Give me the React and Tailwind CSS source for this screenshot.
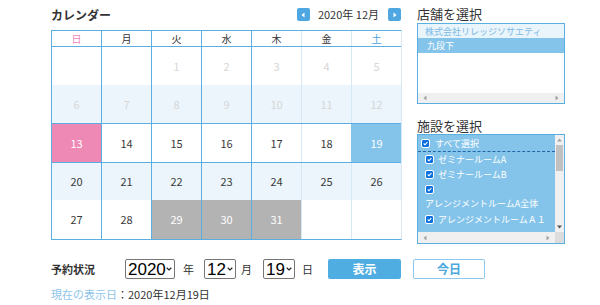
import React from 'react';

const weeks = [
  [null, null, 1, 2, 3, 4, 5],
  [6, 7, 8, 9, 10, 11, 12],
  [13, 14, 15, 16, 17, 18, 19],
  [20, 21, 22, 23, 24, 25, 26],
  [27, 28, 29, 30, 31, null, null],
];

const rowCls = [
  'h-[38px] bg-white',
  'h-[39px] bg-[#ecf5fc] border-b border-[#5aaee0]',
  'h-[39px] bg-white border-b border-[#5aaee0]',
  'h-[37px] bg-[#ecf5fc]',
  'h-[39px] bg-white',
];

const days = ['日', '月', '火', '水', '木', '金', '土'];

function cellCls(r, c, d) {
  let cls = 'flex items-center justify-center text-[11px] ';
  cls += c === 0 ? 'w-[49px] ' : 'w-[50px] border-l ';
  if (d === 13) return cls + 'bg-[#ee88b5] text-white';
  if (d === 19) return cls + 'bg-[#85c4ea] text-white border-[#85c4ea]';
  if (d === 29 || d === 30 || d === 31) return cls + 'bg-[#b3b3b3] text-white border-[#5aaee0]';
  cls += c === 0 ? '' : c <= 4 ? 'border-[#5aaee0] ' : 'border-[#d6e8f4] ';
  cls += r < 2 ? 'text-[#d6d6d6]' : 'text-[#3a3a3a]';
  return cls;
}

function headCls(c) {
  let cls = 'flex items-center justify-center text-[10px] ';
  cls += c === 0 ? 'w-[49px] ' : 'w-[50px] border-l ';
  cls += c === 0 ? '' : c <= 4 ? 'border-[#5aaee0] ' : 'border-[#d6e8f4] ';
  cls += c === 0 ? 'text-[#ee86b8]' : c === 6 ? 'text-[#4aa3dc]' : 'text-[#333]';
  return cls;
}

function Check() {
  return (
    <span className="flex h-[7px] w-[7px] shrink-0 items-center justify-center rounded-[1px] bg-[#0b6fe0] outline outline-1 outline-white">
      <svg width="5" height="5" viewBox="0 0 5 5">
        <path d="M0.7 2.5 L2 3.8 L4.4 1.1" stroke="white" strokeWidth="1.1" fill="none" />
      </svg>
    </span>
  );
}

function TriLeft({ color = '#a3a3a3' }) {
  return (
    <svg width="4" height="6" viewBox="0 0 4 6"><path d="M3.5 0.5 L0.5 3 L3.5 5.5 Z" fill={color} /></svg>
  );
}
function TriRight({ color = '#a3a3a3' }) {
  return (
    <svg width="4" height="6" viewBox="0 0 4 6"><path d="M0.5 0.5 L3.5 3 L0.5 5.5 Z" fill={color} /></svg>
  );
}

function Chevron() {
  return (
    <svg width="6" height="4" viewBox="0 0 6 4" className="shrink-0">
      <path d="M0.7 0.8 L3 3 L5.3 0.8" stroke="#222" strokeWidth="1.2" fill="none" />
    </svg>
  );
}

function Select({ value, w }) {
  return (
    <div className={`flex h-[20px] ${w} items-center justify-between rounded-[2px] border border-[#767676] bg-white pl-[2px] pr-[2px]`}>
      <span className="font-['Liberation_Sans',sans-serif] text-[17px] leading-none text-black">{value}</span>
      <Chevron />
    </div>
  );
}

export default function App() {
  return (
    <div className="h-[305px] w-[600px] overflow-hidden bg-white font-['Noto_Sans_CJK_JP',sans-serif] text-[#333]">
      <div className="flex h-[259px]">
        {/* left column */}
        <div className="ml-[51px] flex w-[351px] flex-col">
          <div className="flex h-[30px] items-center justify-between pb-[1px]">
            <span className="text-[12px] font-bold leading-none text-[#333]">カレンダー</span>
            <div className="flex items-center">
              <div className="flex h-[13px] w-[13px] items-center justify-center rounded-[2px] bg-[#4ea7e0]">
                <TriLeft color="#ffffff" />
              </div>
              <span className="ml-[8px] mr-[9px] text-[11px] leading-none text-[#333]">2020年 12月</span>
              <div className="mr-[1px] flex h-[13px] w-[13px] items-center justify-center rounded-[2px] bg-[#4ea7e0]">
                <TriRight color="#ffffff" />
              </div>
            </div>
          </div>
          <div className="flex flex-col border border-[#5aaee0] border-r-[#d6e8f4]">
            <div className="flex h-[16px] border-b border-[#5aaee0] bg-white">
              {days.map((d, c) => (
                <div key={d} className={headCls(c)}>{d}</div>
              ))}
            </div>
            {weeks.map((wk, r) => (
              <div key={r} className={`flex ${rowCls[r]}`}>
                {wk.map((d, c) => (
                  <div key={c} className={cellCls(r, c, d)}>{d ?? ''}</div>
                ))}
              </div>
            ))}
          </div>
        </div>

        {/* right column */}
        <div className="ml-[15px] flex w-[148px] flex-col">
          <div className="flex h-[23px] items-center pt-[3px] text-[13px] leading-none text-[#333]">店舗を選択</div>
          <div className="flex h-[81px] flex-col border border-[#5aaee0] bg-white">
            <div className="flex h-[14px] items-center bg-[#e9f4fb] pl-[7px] text-[9px] leading-none text-[#7dbbe5]">株式会社リレッジソサエティ</div>
            <div className="flex h-[15px] items-center bg-[#85c4ea] pl-[9px] text-[9px] leading-none text-white">九段下</div>
            <div className="flex-1" />
            <div className="flex h-[10px] items-center justify-between bg-[#f0f0f0] px-[5px]">
              <TriLeft />
              <TriRight />
            </div>
          </div>
          <div className="flex h-[30px] items-center pt-[12px] text-[13px] leading-none text-[#333]">施設を選択</div>
          <div className="flex h-[110px] flex-col border border-[#5aaee0] bg-[#85c4ea]">
            <div className="flex flex-1">
              <div className="flex flex-1 flex-col text-[9px] leading-none text-white">
                <div className="flex h-[17px] items-center gap-[6px] border-b border-dashed border-[#2065a5] pl-[4px] pt-[1px]">
                  <Check />
                  <span>すべて選択</span>
                </div>
                <div className="flex h-[15px] items-center gap-[5px] pl-[8px]">
                  <Check />
                  <span>ゼミナールームA</span>
                </div>
                <div className="flex h-[15px] items-center gap-[5px] pl-[8px]">
                  <Check />
                  <span>ゼミナールームB</span>
                </div>
                <div className="flex h-[14px] items-center pl-[8px]">
                  <Check />
                </div>
                <div className="flex h-[15px] items-center pl-[7px] whitespace-nowrap">アレンジメントルームA全体</div>
                <div className="flex h-[16px] items-center gap-[5px] pl-[8px] whitespace-nowrap">
                  <Check />
                  <span>アレンジメントルームＡ１</span>
                </div>
              </div>
              <div className="flex w-[9px] flex-col items-center bg-[#f0f0f0]">
                <svg width="5" height="4" viewBox="0 0 5 4" className="mt-[3px]"><path d="M0 3.5 L2.5 0.5 L5 3.5 Z" fill="#a3a3a3" /></svg>
                <div className="mt-[3px] h-[26px] w-[7px] bg-[#c1c1c1]" />
                <div className="flex-1" />
                <svg width="5" height="4" viewBox="0 0 5 4" className="mb-[3px]"><path d="M0 0.5 L2.5 3.5 L5 0.5 Z" fill="#505050" /></svg>
              </div>
            </div>
            <div className="flex h-[11px]">
              <div className="flex flex-1 items-center justify-between bg-[#f0f0f0] px-[5px]">
                <TriLeft />
                <TriRight />
              </div>
              <div className="w-[9px] bg-[#dcdcdc]" />
            </div>
          </div>
        </div>
      </div>

      {/* bottom */}
      <div className="ml-[51px] flex h-[20px] items-center">
        <span className="w-[74px] text-[11px] font-bold leading-none text-[#333]">予約状況</span>
        <Select value="2020" w="w-[50px]" />
        <span className="ml-[8px] text-[11px] leading-none text-[#333]">年</span>
        <div className="ml-[10px]"><Select value="12" w="w-[32px]" /></div>
        <span className="ml-[5px] text-[11px] leading-none text-[#333]">月</span>
        <div className="ml-[11px]"><Select value="19" w="w-[32px]" /></div>
        <span className="ml-[7px] text-[11px] leading-none text-[#333]">日</span>
        <div className="ml-[15px] flex h-[20px] w-[73px] items-center justify-center rounded-[2px] bg-[#4fade2] text-[12px] font-bold leading-none text-white">表示</div>
        <div className="ml-[12px] flex h-[20px] w-[72px] items-center justify-center rounded-[2px] border border-[#8dc9ee] bg-white text-[12px] font-bold leading-none text-[#4ba7df]">今日</div>
      </div>
      <div className="ml-[51px] mt-[8px] text-[11px] leading-[14px]">
        <span className="text-[#8ec4ea]">現在の表示日</span>
        <span className="text-[#333]">：2020年12月19日</span>
      </div>
    </div>
  );
}
